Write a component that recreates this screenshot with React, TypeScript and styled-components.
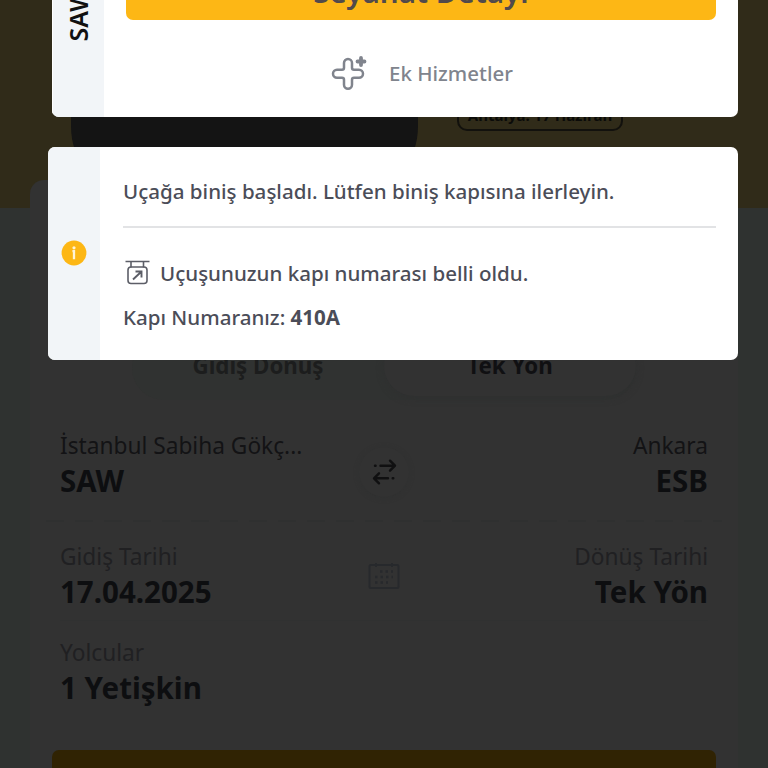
import React from "react";
import styled, { createGlobalStyle } from "styled-components";

const GlobalStyle = createGlobalStyle`
  * { box-sizing: border-box; }
  html, body { margin: 0; }
  body { font-family: "Noto Sans", "Open Sans", sans-serif; background: #2f3230; overflow: hidden; }
`;

const Screen = styled.div`
  position: relative;
  width: 768px;
  height: 768px;
  overflow: hidden;
  background: #2f3230;
`;

const Page = styled.main`
  display: flex;
  flex-direction: column;
  height: 100%;
`;

const Hero = styled.header`
  flex: none;
  display: flex;
  align-items: flex-start;
  height: 208px;
  padding-left: 71px;
  background: #302b19;
`;

const Phone = styled.div`
  width: 347px;
  height: 160px;
  border-radius: 0 0 14px 14px / 0 0 34px 34px;
  background: #141414;
`;

const PromoTag = styled.div`
  width: 166px;
  height: 35px;
  margin: 96px 0 0 39px;
  border: 2px solid #12110d;
  border-radius: 10px;
  color: #0b0b09;
  font-size: 15px;
  font-weight: 700;
  line-height: 35px;
  text-align: center;
  white-space: nowrap;
`;

const SearchCard = styled.section`
  flex: none;
  display: flex;
  flex-direction: column;
  height: 620px;
  margin: -28px 30px 0;
  padding: 156px 22px 0;
  border-radius: 14px;
  background: #323232;
`;

const TripTabs = styled.div`
  flex: none;
  display: grid;
  grid-template-columns: 1fr 1fr;
  width: 504px;
  height: 64px;
  margin: 0 auto;
  border-radius: 32px;
  background: #303231;
`;

const TripTab = styled.div<{ $active?: boolean }>`
  display: flex;
  align-items: flex-start;
  justify-content: center;
  height: 60px;
  padding-top: 15px;
  border-radius: 30px;
  color: ${(p) => (p.$active ? "#101012" : "#1c1d1d")};
  background: ${(p) => (p.$active ? "#323232" : "transparent")};
  box-shadow: ${(p) => (p.$active ? "0 2px 7px #2f3030" : "none")};
  font-size: 22.3px;
  font-weight: 700;
  line-height: 30px;
`;

const Row = styled.div<{ $height: number; $line?: boolean }>`
  flex: none;
  display: grid;
  grid-template-columns: 1fr 64px 1fr;
  height: ${(p) => p.$height}px;
  margin: 0 8px;
  border-bottom: ${(p) => (p.$line ? "1px solid #303131" : "none")};
`;

const TearLine = styled.div`
  flex: none;
  height: 2px;
  margin: 0 -6px;
  background: repeating-linear-gradient(90deg, #2f3030 0 18px, transparent 18px 29px);
`;

const Field = styled.div<{ $end?: boolean; $top: number }>`
  display: flex;
  flex-direction: column;
  padding-top: ${(p) => p.$top}px;
  text-align: ${(p) => (p.$end ? "right" : "left")};
  white-space: nowrap;
`;

const Label = styled.span<{ $strong?: boolean }>`
  color: ${(p) => (p.$strong ? "#131315" : "#202022")};
  font-size: 22.7px;
  line-height: 30px;
`;

const Value = styled.span`
  color: #0d0e10;
  font-size: 29.5px;
  font-weight: 700;
  line-height: 40px;
`;

const IconSlot = styled.div<{ $top: number }>`
  display: flex;
  justify-content: center;
  padding-top: ${(p) => p.$top}px;
`;

const SwapButton = styled.span`
  display: flex;
  align-items: center;
  justify-content: center;
  width: 50px;
  height: 50px;
  border-radius: 50%;
  background: #323232;
  box-shadow: 0 1px 5px #303131;
`;

const SearchButton = styled.div`
  flex: none;
  height: 60px;
  margin-top: 24px;
  border-radius: 7px;
  background: #302303;
`;

const Modal = styled.div`
  position: absolute;
  inset: 0 30px auto 48px;
  display: flex;
  flex-direction: column;
  gap: 30px;
`;

const Ticket = styled.article<{ $height: number; $inset?: number }>`
  display: flex;
  height: ${(p) => p.$height}px;
  margin-left: ${(p) => p.$inset ?? 0}px;
  border-radius: ${(p) => (p.$inset ? "0 0 7px 7px" : "7px")};
  background: #fff;
  overflow: hidden;
`;

const Stub = styled.aside`
  flex: none;
  display: flex;
  width: 52px;
  background: #f2f5f8;
`;

const RouteStub = styled(Stub)`
  justify-content: center;
  align-items: flex-start;
  padding-right: 2px;
  border-left: 1px solid #fff;
`;

const NoticeStub = styled(Stub)`
  align-items: center;
  justify-content: center;
  padding-bottom: 1px;
`;

const AirportCode = styled.span`
  margin-top: -12px;
  writing-mode: vertical-rl;
  transform: rotate(180deg);
  color: #111;
  font-size: 25px;
  font-weight: 600;
  line-height: 34px;
`;

const Actions = styled.div`
  flex: 1;
  display: flex;
  flex-direction: column;
  padding: 0 22px;
`;

const DetailButton = styled.div`
  flex: none;
  height: 50px;
  margin-top: -30px;
  border-radius: 7px;
  background: #fdb715;
  color: #514a4b;
  font-size: 29.6px;
  font-weight: 600;
  line-height: 44px;
  text-align: center;
`;

const ExtraServices = styled.div`
  display: flex;
  align-items: center;
  gap: 22px;
  height: 36px;
  margin: 35px 0 0 205px;
  color: #80848d;
  font-size: 20.5px;
  font-weight: 500;
`;

const Notice = styled.div`
  flex: 1;
  display: flex;
  flex-direction: column;
  padding: 0 22px 0 23px;
  color: #4b4d58;
  font-size: 20.56px;
  font-weight: 500;
  line-height: 30px;
  white-space: nowrap;
`;

const BoardingText = styled.p`
  height: 81px;
  margin: 0;
  padding-top: 29px;
  border-bottom: 2px solid #e2e3e5;
`;

const GateText = styled.p`
  display: flex;
  align-items: center;
  gap: 8px;
  margin: 30px 0 0;
`;

const GateNumber = styled.p`
  margin: 14px 0 0;
  b { font-weight: 700; }
`;

function ExtrasIcon() {
  return (
    <svg width="36" height="36" viewBox="0 0 36 36" fill="none" stroke="#80848d">
      <path strokeWidth="2.5" d="M13 8a4 4 0 0 1 8 0v4.7q0 2 2 2h5a4 4 0 0 1 0 8h-5q-2 0-2 2v5a4 4 0 0 1-8 0v-5q0-2-2-2H6a4 4 0 0 1 0-8h5q2 0 2-2z" />
      <path strokeWidth="3.8" strokeLinecap="round" d="M30 3v7M26.5 6.500h7" />
    </svg>
  );
}

function InfoIcon() {
  return (
    <svg width="26" height="26" viewBox="0 0 26 26">
      <circle cx="13" cy="13" r="12.4" fill="#fdb715" />
      <circle cx="13" cy="7.8" r="1.6" fill="#fff4d8" />
      <path d="M11.4 11.200h1.6v8" fill="none" stroke="#fff4d8" strokeWidth="2.3" />
    </svg>
  );
}

function GateIcon() {
  return (
    <svg width="29" height="28" viewBox="0 0 29 28" fill="none" stroke="#5c5e67" strokeWidth="1.6">
      <path d="M2.5 2.500h24M8 2.500v6M20.500 2.500v6" />
      <rect x="5" y="8" width="19" height="16.5" rx="3" />
      <path strokeWidth="1.9" d="M10 20.500l8.500-8M12.500 12.500h6v6" />
    </svg>
  );
}

function SwapIcon() {
  return (
    <svg width="26" height="28" viewBox="0 0 26 28" fill="none" stroke="#101011" strokeWidth="2.4" strokeLinecap="round" strokeLinejoin="round">
      <path d="M9.500 7.700h14M19 2.700l5 5-5 5M4 7.700h.6M17 20.300H3.500M8 15.300l-5 5 5 5M21.700 20.300h.6" />
    </svg>
  );
}

function CalendarIcon() {
  return (
    <svg width="32" height="30" viewBox="0 0 32 30" fill="none" stroke="#27292c" strokeWidth="2">
      <rect x="1.5" y="4" width="29" height="23" rx="1.5" />
      <path strokeWidth="2.4" strokeDasharray="2.5 3" d="M12 10.500h13M7 16h18M7 21.500h13" />
      <path d="M8 2v4M24 2v4" />
    </svg>
  );
}

export default function App() {
  return (
    <Screen>
      <GlobalStyle />
      <Page>
        <Hero>
          <Phone />
          <PromoTag>Antalya: 17 Haziran</PromoTag>
        </Hero>
        <SearchCard>
          <TripTabs>
            <TripTab>Gidiş Dönüş</TripTab>
            <TripTab $active>Tek Yön</TripTab>
          </TripTabs>
          <Row $height={120}>
            <Field $top={31}>
              <Label $strong>İstanbul Sabiha Gökç...</Label>
              <Value>SAW</Value>
            </Field>
            <IconSlot $top={47}>
              <SwapButton><SwapIcon /></SwapButton>
            </IconSlot>
            <Field $end $top={31}>
              <Label $strong>Ankara</Label>
              <Value>ESB</Value>
            </Field>
          </Row>
          <TearLine />
          <Row $height={99} $line>
            <Field $top={20}>
              <Label>Gidiş Tarihi</Label>
              <Value>17.04.2025</Value>
            </Field>
            <IconSlot $top={39}><CalendarIcon /></IconSlot>
            <Field $end $top={20}>
              <Label>Dönüş Tarihi</Label>
              <Value>Tek Yön</Value>
            </Field>
          </Row>
          <Row $height={105}>
            <Field $top={17}>
              <Label>Yolcular</Label>
              <Value>1 Yetişkin</Value>
            </Field>
          </Row>
          <SearchButton />
        </SearchCard>
      </Page>
      <Modal>
        <Ticket $height={117} $inset={4}>
          <RouteStub><AirportCode>SAW</AirportCode></RouteStub>
          <Actions>
            <DetailButton>Seyahat Detayı</DetailButton>
            <ExtraServices><ExtrasIcon />Ek Hizmetler</ExtraServices>
          </Actions>
        </Ticket>
        <Ticket $height={213}>
          <NoticeStub><InfoIcon /></NoticeStub>
          <Notice>
            <BoardingText>Uçağa biniş başladı. Lütfen biniş kapısına ilerleyin.</BoardingText>
            <GateText><GateIcon />Uçuşunuzun kapı numarası belli oldu.</GateText>
            <GateNumber>Kapı Numaranız: <b>410A</b></GateNumber>
          </Notice>
        </Ticket>
      </Modal>
    </Screen>
  );
}
